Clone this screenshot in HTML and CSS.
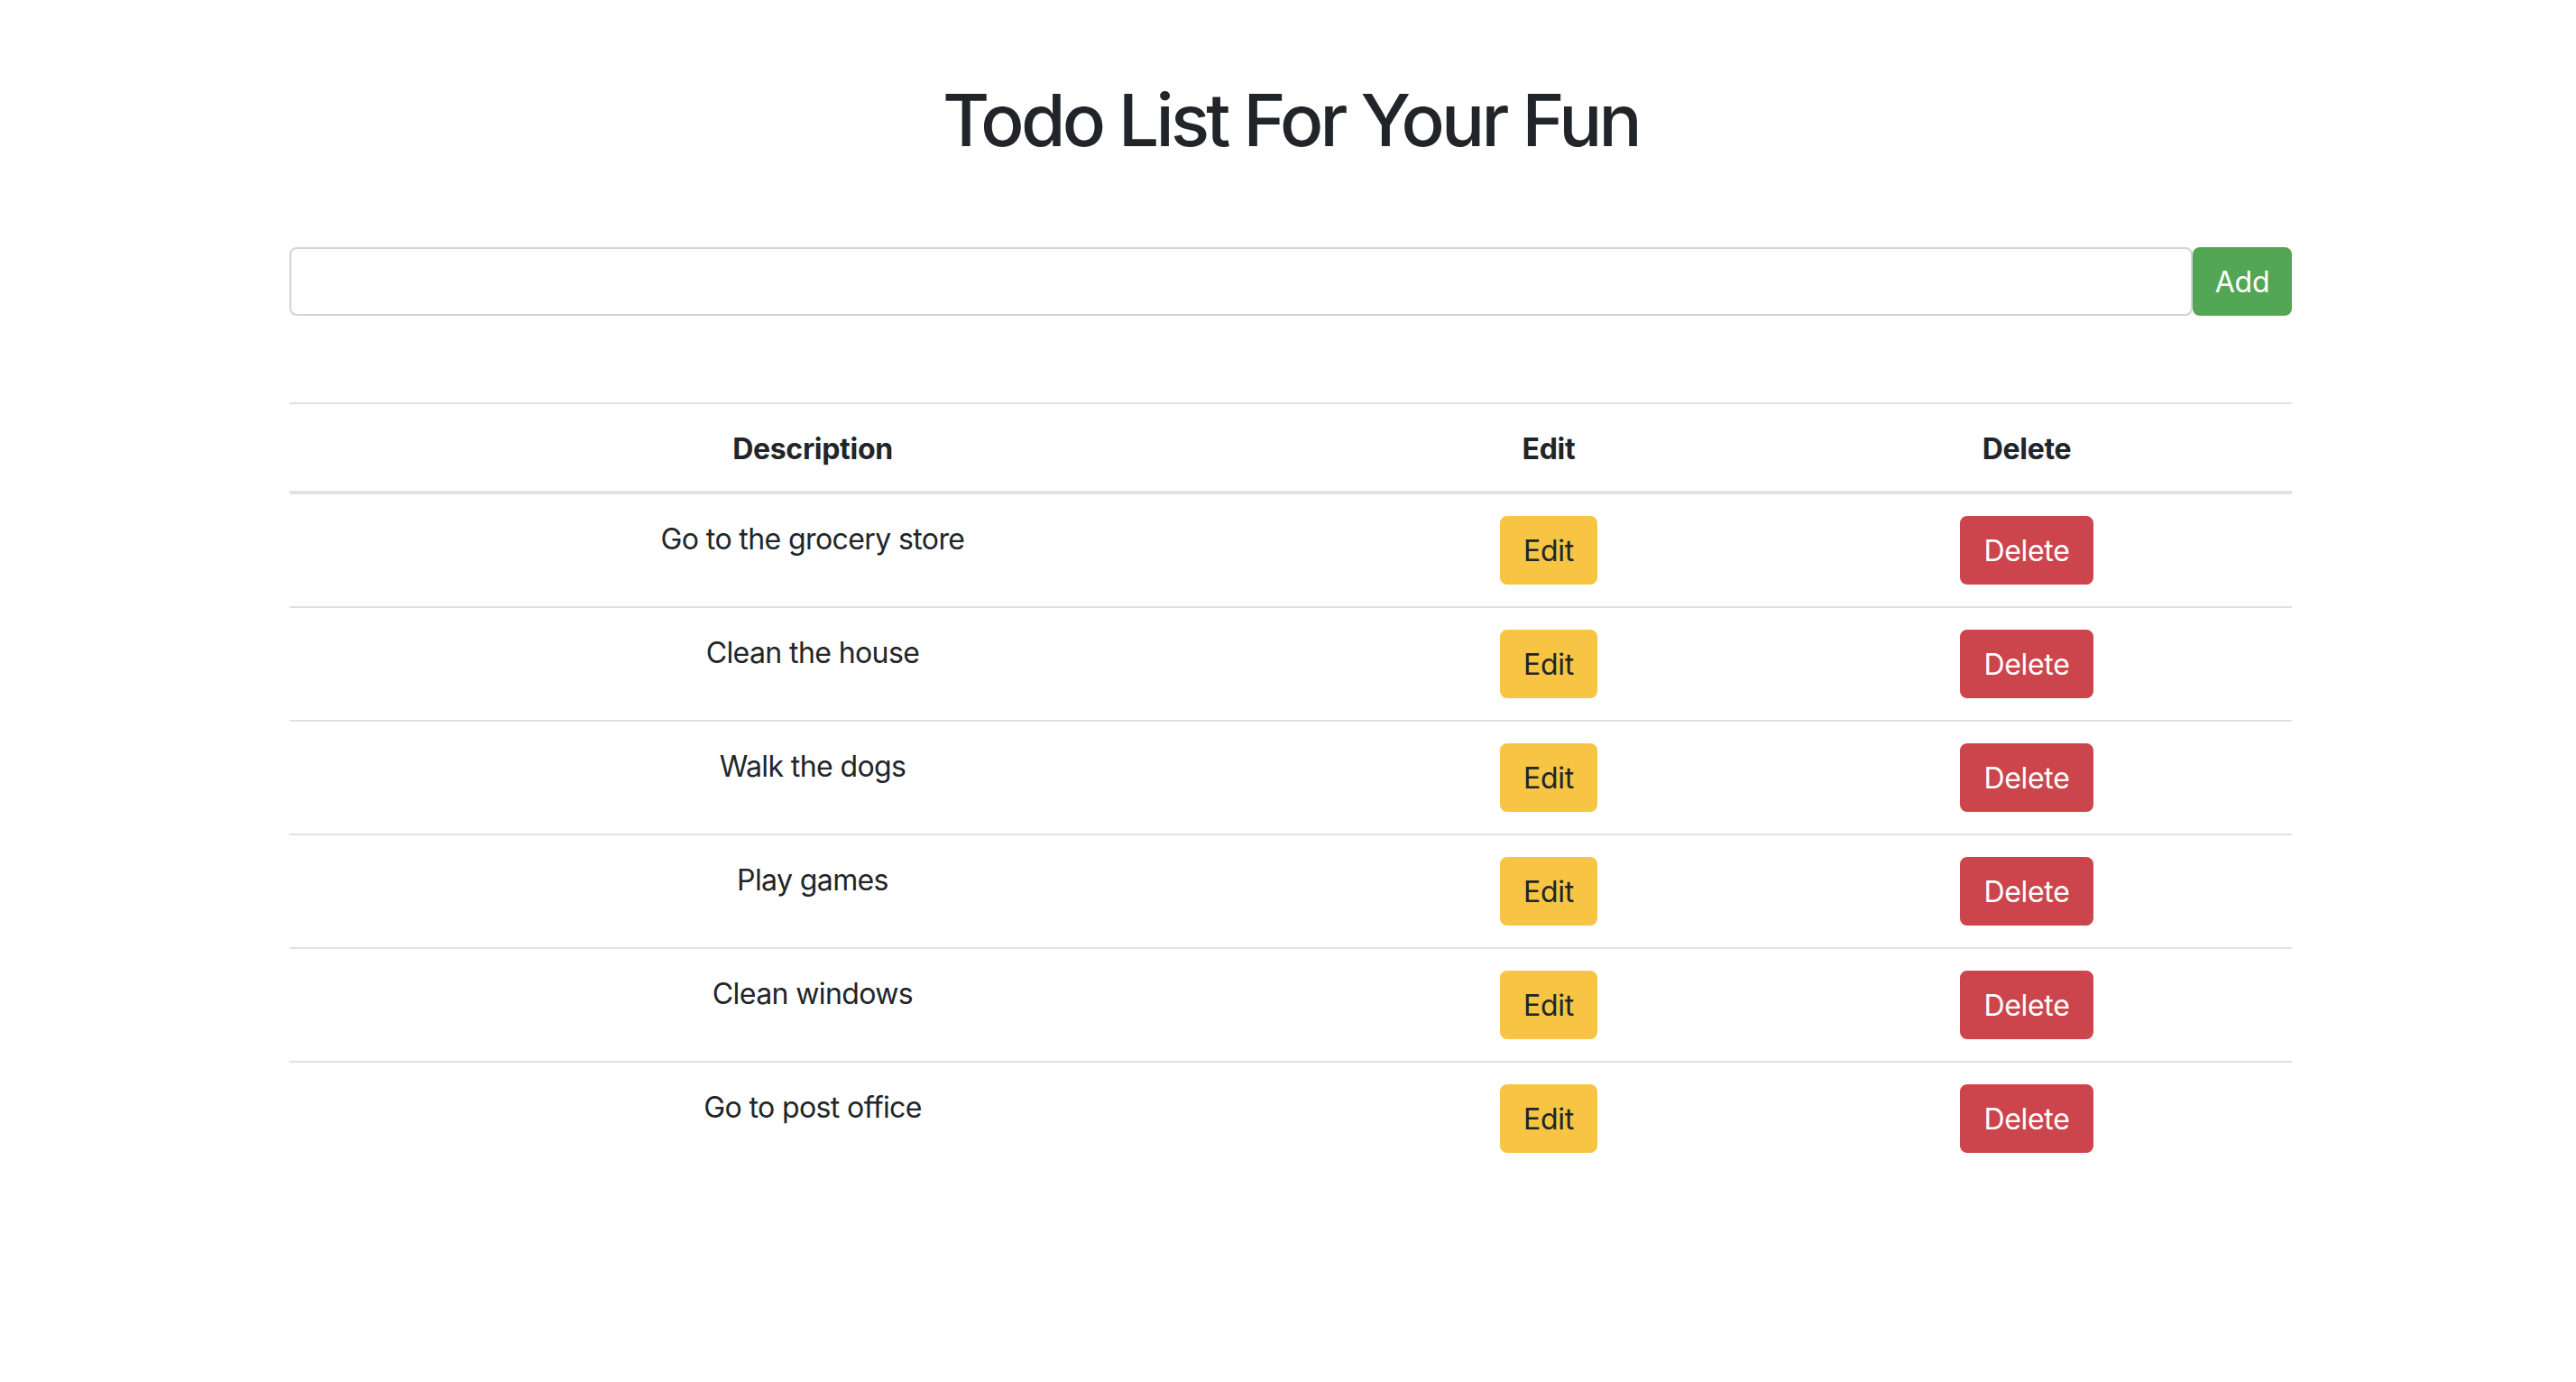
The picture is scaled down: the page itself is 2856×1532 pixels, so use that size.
FILE: index.html
```html
<!DOCTYPE html>
<html lang="en">
<head>
<meta charset="utf-8">
<title>Todo List For Your Fun</title>
<link rel="stylesheet" href="styles.css">
</head>
<body>
<div class="container">
  <h1 class="title">Todo List For Your Fun</h1>
  <form class="add-form">
    <input class="add-input" type="text">
    <button class="btn btn-add" type="button">Add</button>
  </form>
  <table class="todo-table">
    <colgroup>
      <col class="col-desc">
      <col class="col-edit">
      <col class="col-del">
    </colgroup>
    <thead>
      <tr><th>Description</th><th>Edit</th><th>Delete</th></tr>
    </thead>
    <tbody>
      <tr><td>Go to the grocery store</td><td><button class="btn btn-edit">Edit</button></td><td><button class="btn btn-delete">Delete</button></td></tr>
      <tr><td>Clean the house</td><td><button class="btn btn-edit">Edit</button></td><td><button class="btn btn-delete">Delete</button></td></tr>
      <tr><td>Walk the dogs</td><td><button class="btn btn-edit">Edit</button></td><td><button class="btn btn-delete">Delete</button></td></tr>
      <tr><td>Play games</td><td><button class="btn btn-edit">Edit</button></td><td><button class="btn btn-delete">Delete</button></td></tr>
      <tr><td>Clean windows</td><td><button class="btn btn-edit">Edit</button></td><td><button class="btn btn-delete">Delete</button></td></tr>
      <tr><td>Go to post office</td><td><button class="btn btn-edit">Edit</button></td><td><button class="btn btn-delete">Delete</button></td></tr>
    </tbody>
  </table>
</div>
</body>
</html>
```

FILE: styles.css
```css
* { box-sizing: border-box; }
html, body {
  margin: 0;
  padding: 0;
  background: #ffffff;
}
body {
  font-family: Inter, "Liberation Sans", Arial, sans-serif;
  font-size: 32px;
  line-height: 48px;
  color: #212529;
}
.container {
  width: 2220px;
  margin-left: calc(50% - 1107px);
  padding-top: 85px;
}
.title {
  margin: 0;
  font-size: 80px;
  line-height: 96px;
  font-weight: 500;
  text-align: center;
  letter-spacing: -3.7px;
}
.add-form {
  display: flex;
  margin: 93px 0 0 0;
}
.add-input {
  flex: 1;
  height: 76px;
  border: 2px solid #ced4da;
  border-radius: 8px;
  background: #fff;
  font: inherit;
  padding: 12px 24px;
  outline: none;
}
.btn {
  display: inline-block;
  font-family: inherit;
  font-size: 32px;
  line-height: 48px;
  padding: 13px 24px 11px;
  border: 2px solid transparent;
  border-radius: 8px;
  cursor: pointer;
  letter-spacing: -0.3px;
}
.btn-add {
  background: #53a653;
  border-color: #53a653;
  color: #fff;
  border-radius: 8px;
  width: 110px;
  padding: 13px 0 11px;
}
.todo-table {
  width: 100%;
  margin-top: 96px;
  border-collapse: collapse;
  table-layout: fixed;
}
.col-desc { width: 1160px; }
.col-edit { width: 472px; }
.col-del { width: 588px; }
.todo-table th,
.todo-table td {
  text-align: center;
  vertical-align: top;
  padding: 24px 16px;
  border-top: 2px solid #dee2e6;
  letter-spacing: -0.6px;
}
.todo-table th {
  font-weight: 700;
  padding-top: 26px;
  padding-bottom: 22px;
  border-bottom: 4px solid #dee2e6;
  letter-spacing: -0.3px;
}
.todo-table tbody td:first-child {
  padding-top: 26px;
  padding-bottom: 22px;
}
.btn-edit {
  background: #f7c444;
  border-color: #f7c444;
  color: #212529;
}
.btn-delete {
  background: #cc454c;
  border-color: #cc454c;
  color: #fff;
}
```
